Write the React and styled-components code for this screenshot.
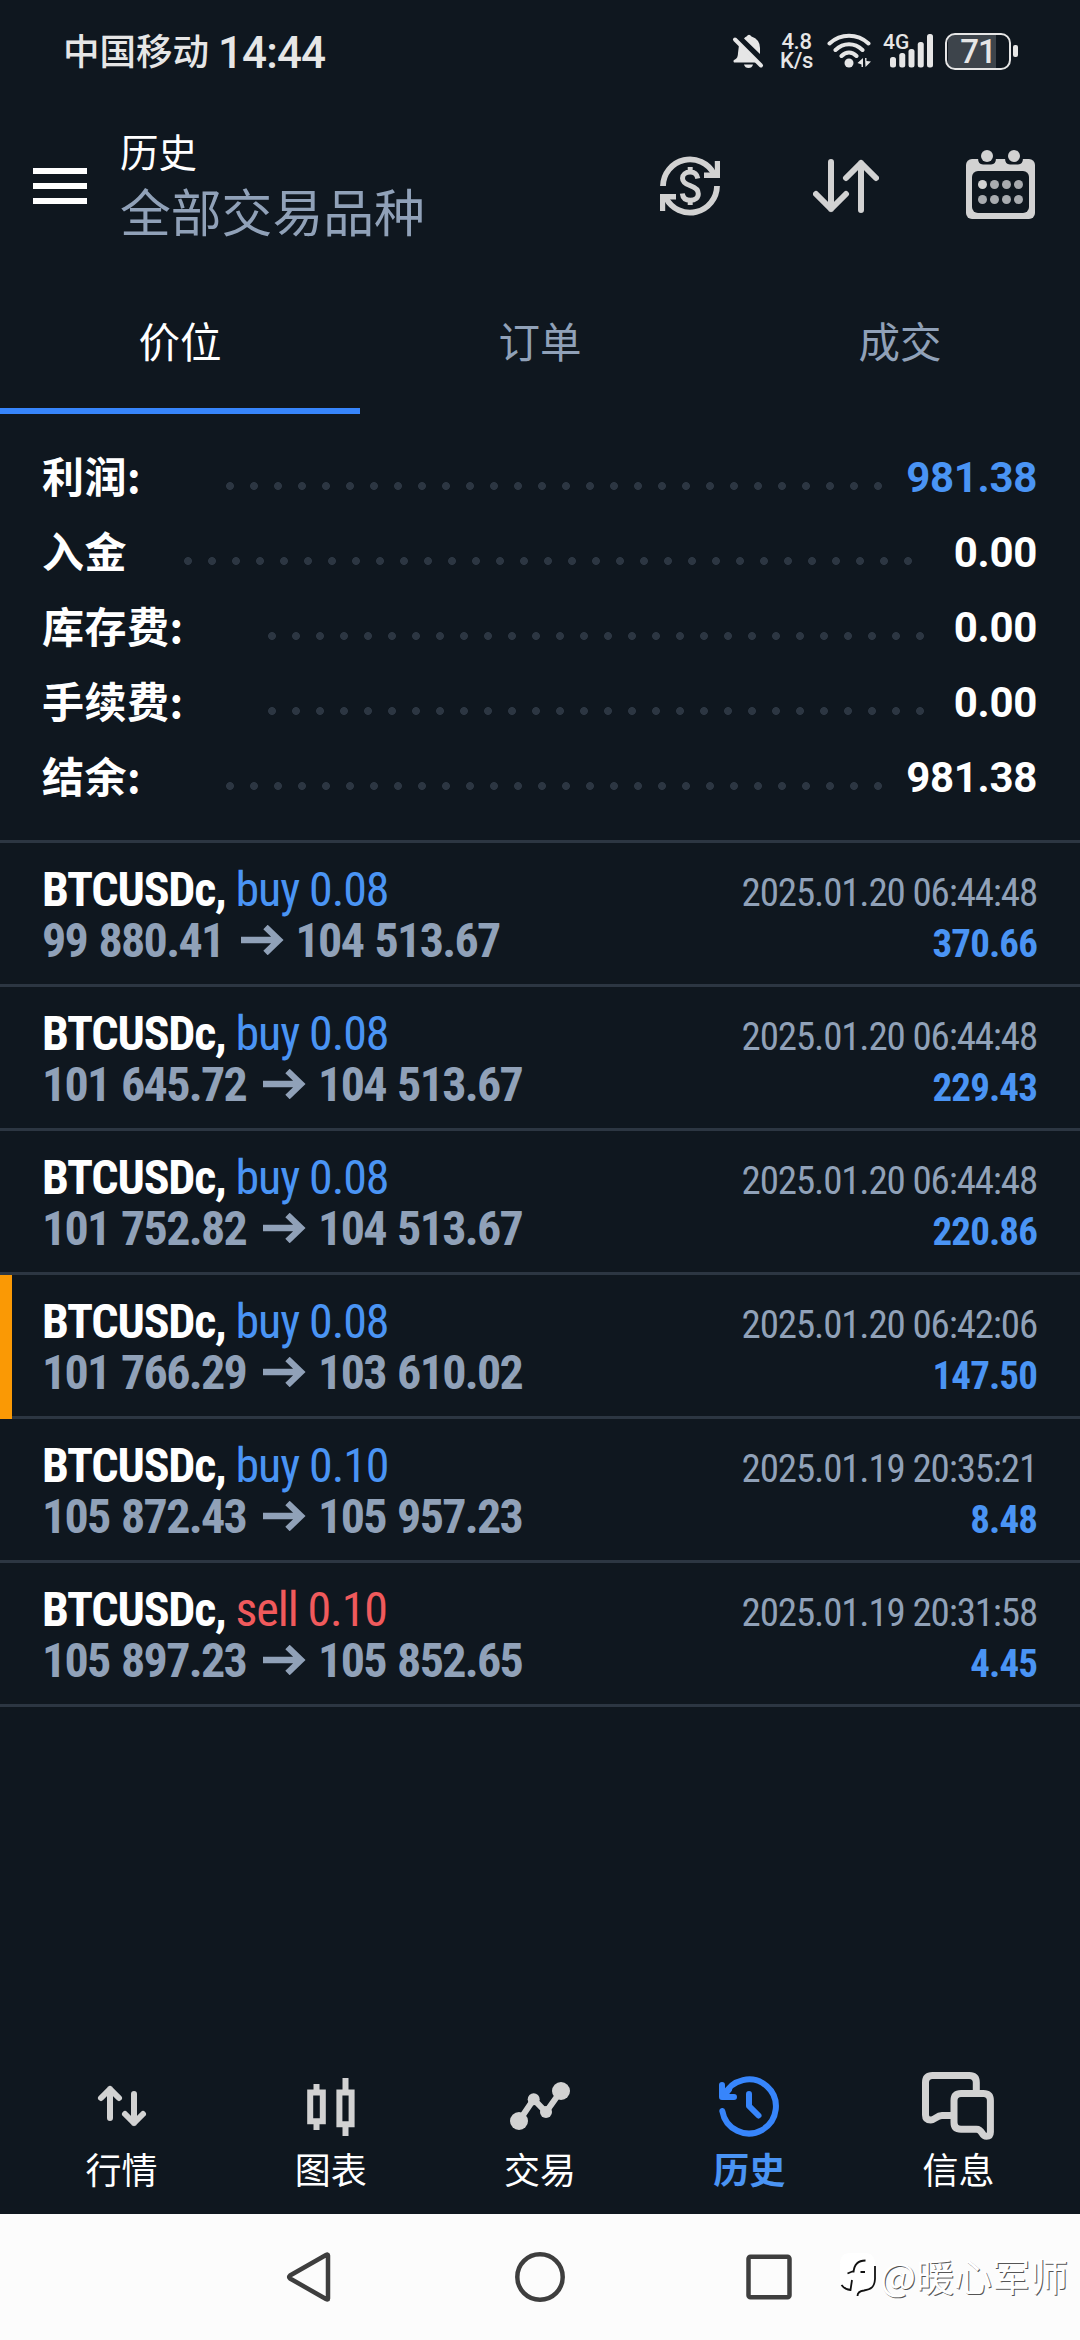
import React from 'react';
import styled, { createGlobalStyle } from 'styled-components';

const GlobalStyle = createGlobalStyle`
  body {
    margin: 0;
    background-color: #0f171f;
  }
  svg {
    display: block;
    flex-shrink: 0;
  }
`;

const cjk = '"Noto Sans CJK SC", sans-serif';
const roboto = 'Roboto, "Noto Sans CJK SC", sans-serif';
const condensed = '"Roboto Condensed", Roboto, sans-serif';

const ICON = '#d2d2d2';
const BLUE = '#4a94f4';
const ACCENT = '#3785fb';
const GREY = '#90a1b8';
const LINE = '#2c3642';

const Screen = styled.div`
  width: 1080px;
  height: 2340px;
  display: flex;
  flex-direction: column;
  background-color: #0f171f;
  color: #fff;
  font-family: ${roboto};
  overflow: hidden;
`;

/* Status bar */

const StatusBar = styled.div`
  height: 102px;
  box-sizing: border-box;
  padding: 0 62px 0 63px;
  display: flex;
  align-items: center;
  color: #e6e6e6;
`;

const Carrier = styled.span`
  margin-bottom: 2px;
  font: 500 36.5px/50px ${cjk};
`;

const Clock = styled.span`
  flex: 1;
  margin-left: 9px;
  margin-top: 4px;
  font: 500 44px/50px ${roboto};
  letter-spacing: -0.9px;
`;

const Speed = styled.div`
  width: 35px;
  margin-left: 15px;
  display: flex;
  flex-direction: column;
  align-items: center;
  font: 500 22px/19px ${roboto};
  letter-spacing: -0.3px;
`;

const StatusIcon = styled.div`
  position: relative;
  margin-left: ${props => props.$gap}px;
`;

const NetworkType = styled.span`
  position: absolute;
  left: 0;
  top: -3px;
  font: 500 21px/24px ${roboto};
`;

const Battery = styled.div`
  width: 66px;
  height: 37px;
  box-sizing: border-box;
  margin-left: 12px;
  border: 2px solid #e6e6e6;
  border-radius: 10px;
  background: linear-gradient(#3d444b, #3d444b) 1px 0 / 48px 100% no-repeat;
  font: 500 33px/34px ${roboto};
  letter-spacing: -1px;
  text-align: center;
`;

const BatteryTip = styled.div`
  width: 5px;
  height: 12px;
  margin-left: 2px;
  border-radius: 2px;
  background-color: #e6e6e6;
`;

/* Header */

const Header = styled.header`
  height: 168px;
  box-sizing: border-box;
  padding: 0 45px 0 33px;
  display: flex;
  align-items: center;
`;

const Burger = styled.div`
  width: 54px;
  height: 36px;
  box-sizing: border-box;
  border-top: 6px solid #fff;
  border-bottom: 6px solid #fff;
  background: linear-gradient(#fff, #fff) 0 9px / 100% 6px no-repeat;
`;

const Titles = styled.div`
  flex: 1;
  margin-left: 33px;
  margin-bottom: 8px;
`;

const Title = styled.div`
  font: 400 38.5px/54px ${cjk};
`;

const Subtitle = styled.div`
  margin-top: 1px;
  color: ${GREY};
  font: 400 50.8px/64px ${cjk};
`;

const Actions = styled.div`
  display: flex;
  align-items: center;
`;

const Action = styled.div`
  margin-left: ${props => props.$gap || 0}px;
`;

/* Tabs */

const Tabs = styled.div`
  height: 144px;
  display: grid;
  grid-template-columns: repeat(3, 1fr);
`;

const Tab = styled.div`
  box-sizing: border-box;
  height: 144px;
  border-bottom: 6px solid ${props => (props.$active ? ACCENT : 'transparent')};
  padding-top: 4px;
  color: ${props => (props.$active ? '#fff' : GREY)};
  font: 400 41.5px/132px ${cjk};
  text-align: center;
`;

/* Summary */

const Summary = styled.div`
  padding: 26px 43px 25px 42px;
`;

const SummaryRow = styled.div`
  height: 75px;
  display: flex;
  align-items: center;
`;

const Label = styled.span`
  width: ${props => props.$width}px;
  margin-bottom: 6px;
  font: 700 42px/60px ${cjk};
  letter-spacing: 0.5px;
  white-space: nowrap;
`;

const Dots = styled.div`
  width: ${props => props.$count * 24 - 16}px;
  height: 8px;
  margin-top: 16px;
  background: radial-gradient(circle at 4px 4px, ${LINE} 3.6px, transparent 4.2px) 0 0 / 24px 8px;
`;

const Value = styled.span`
  margin-left: auto;
  color: ${props => (props.$blue ? BLUE : '#fff')};
  font: 700 42px/75px ${roboto};
  letter-spacing: -0.3px;
`;

/* Deals */

const Deals = styled.div`
  flex: 1;
  border-top: 3px solid ${LINE};
`;

const Deal = styled.div`
  position: relative;
  height: 144px;
  box-sizing: border-box;
  padding: 21px 43px 0 42px;
  border-bottom: 3px solid ${LINE};
`;

const Marker = styled.div`
  position: absolute;
  left: 0;
  top: 0;
  width: 12px;
  height: 144px;
  background-color: #fa9905;
`;

const DealLine = styled.div`
  height: 51px;
  display: flex;
  align-items: baseline;
  justify-content: space-between;
  font: 400 48px/51px ${condensed};
  white-space: pre;
`;

const Symbol = styled.span`
  font-weight: 700;
  letter-spacing: -1.2px;
`;

const Side = styled.span`
  color: ${props => (props.$sell ? '#f05a5c' : BLUE)};
  letter-spacing: -1.1px;
`;

const Prices = styled.span`
  display: flex;
  align-items: baseline;
  color: ${GREY};
  font-weight: 700;
  letter-spacing: -1.7px;
  word-spacing: 2px;
`;

const Time = styled.span`
  color: ${GREY};
  font-size: 39px;
  letter-spacing: -1.15px;
`;

const Profit = styled.span`
  color: ${BLUE};
  font-size: 39px;
  font-weight: 700;
  letter-spacing: -0.9px;
`;

/* Bottom navigation */

const BottomNav = styled.nav`
  height: 144px;
  padding: 0 17px;
  display: grid;
  grid-template-columns: repeat(5, 1fr);
`;

const NavItem = styled.div`
  display: flex;
  flex-direction: column;
  align-items: center;
  color: ${props => (props.$active ? BLUE : '#fff')};
  font: ${props => (props.$active ? 700 : 400)} 36px/53px ${cjk};
`;

const SystemBar = styled.div`
  position: relative;
  height: 126px;
  display: grid;
  grid-template-columns: repeat(3, 230px);
  justify-content: center;
  justify-items: center;
  align-items: center;
  background-color: #fcfcfc;
`;

const Watermark = styled.div`
  position: absolute;
  left: 839px;
  top: 34px;
  display: flex;
  align-items: center;
  gap: 1px;
  color: #fff;
  font: 400 38px/54px ${cjk};
  text-shadow: 1px 1px 0 #555;
  white-space: nowrap;
`;

const Stroke = ({ w, h, color = ICON, width = 6, children }) => (
  <svg
    width={w}
    height={h}
    viewBox={`0 0 ${w} ${h}`}
    fill="none"
    stroke={color}
    strokeWidth={width}
    strokeLinecap="round"
    strokeLinejoin="round"
  >
    {children}
  </svg>
);

const BellOff = () => (
  <svg width="32" height="36" fill="#e6e6e6">
    <path d="M7 12 24 29.5H2Q.5 27.5 3 26.5 6 25 6 20Z" />
    <path d="M12 5.500Q13 4.200 14.500 3.500 17 0 19.500 3.500 28 6.500 28 15V21Z" />
    <path d="M12 31.500H21Q20 35 16.500 35T12 31.500Z" />
    <path d="M3 6.500 29 32.500" stroke="#e6e6e6" strokeWidth="4" strokeLinecap="round" />
  </svg>
);

const Wifi = () => (
  <svg width="44" height="36" fill="none" stroke="#e6e6e6" strokeWidth="4" strokeLinecap="round">
    <path d="M2.500 10.500Q11 2.800 22 2.800T41.500 10.500M8.500 17Q14.500 11.300 22 11.300T35.500 17M14.500 23Q18 19.500 22 19.500T29.500 23" />
    <circle cx="22" cy="30" r="4.500" fill="#e6e6e6" stroke="none" />
    <path d="M30.500 30 36 25V34H34.500V31.500ZM38 25H39.500V28L44 28.500 38.500 34Z" fill="#e6e6e6" stroke="none" />
  </svg>
);

const Signal = () => (
  <svg width="50" height="36" fill="#e6e6e6">
    {[24, 20, 16, 9, 1].map((y, i) => (
      <rect key={y} x={7 + i * 9.25} y={y} width="6" height={34.5 - y} rx="2.5" />
    ))}
  </svg>
);

const Currency = () => (
  <svg width="60" height="60" viewBox="0 0 60 60" fill="none" stroke={ICON} strokeWidth="5.800">
    <path d="M3 30A27 27 0 0 1 54 18" />
    <path d="M57 30A27 27 0 0 1 6 42" />
    <path d="M57.500 5V19.200H44" strokeWidth="5.400" />
    <path d="M2.500 55V40.800H16" strokeWidth="5.400" />
    <path
      d="M37.800 22.500C37 18 34 16 30.200 16 25.500 16 22.500 18.800 22.500 22.200 22.500 26.200 25.500 28 30.200 29.700 35.500 31.500 38.300 33.500 38.300 37.800 38.300 42 35 44.300 30.500 44.300 26 44.300 22.800 42 22.300 37.500M30.200 11V17M30.200 43V49"
      strokeWidth="5"
    />
  </svg>
);

const Swap = () => (
  <Stroke w={66} h={54}>
    <path d="M18 3V50M3 35 18 50 33 35M48 51V4M33 19 48 4 63 19" />
  </Stroke>
);

const Calendar = () => (
  <svg width="69" height="72" viewBox="0 0 69 72">
    <rect y="9" width="69" height="60" rx="6" fill={ICON} />
    <path d="M12 8H30Q30 14.500 25 14.500H17Q12 14.500 12 8ZM39 8H57Q57 14.500 52 14.500H44Q39 14.500 39 8Z" fill="#0f171f" />
    <circle cx="21" cy="6" r="6" fill={ICON} />
    <circle cx="48" cy="6" r="6" fill={ICON} />
    <rect x="6" y="21" width="57" height="42" rx="6" fill="#0f171f" />
    {[34.5, 49.5].map(y =>
      [16.5, 28.5, 40.5, 52.5].map(x => (
        <circle key={x + y} cx={x} cy={y} r="4.5" fill={x + y === 51 ? ICON : '#a8abaf'} />
      ))
    )}
  </svg>
);

const Arrow = () => (
  <svg width="43" height="30" viewBox="0 0 43 30" fill="none" stroke={GREY} strokeWidth="6.300">
    <path d="M0 15H38M24.500 2 38 15 24.500 28" />
  </svg>
);

const ArrowBox = styled.span`
  margin: 0 12px 0 17px;
  transform: translateY(-2px);
`;

const QuotesIcon = () => (
  <Stroke w={72} h={72}>
    <path d="M24 48V19M15 28 24 19 33 28M48 24V53M39 44 48 53 57 44" />
  </Stroke>
);

const ChartIcon = () => (
  <svg width="72" height="72" fill="none" stroke={ICON} strokeWidth="6">
    <path d="M15.200 22.500H27.800V51.200H15.200ZM21.500 14V20M21.500 53V60" />
    <path d="M44.400 22.500H56.600V54.200H44.400ZM50.500 8V20M50.500 56V66" />
  </svg>
);

const TradeIcon = () => (
  <svg width="72" height="72" fill={ICON}>
    <path d="M15 51 29.700 29.300 42 42 57 21" fill="none" stroke={ICON} strokeWidth="6" />
    <circle cx="15" cy="51" r="9" />
    <circle cx="29.700" cy="29.300" r="6" />
    <circle cx="42" cy="42" r="6" />
    <circle cx="57" cy="21" r="9" />
  </svg>
);

const HistoryIcon = () => (
  <Stroke w={72} h={72} color={ACCENT}>
    <path d="M9.300 41A27 27 0 1 0 11 26M9 15V27H21M10.500 26 16 19.500" />
    <path d="M36 24V36L45.500 45.500" />
  </Stroke>
);

const MessagesIcon = () => (
  <Stroke w={72} h={72} width={7}>
    <path
      d="M29.500 45.500H20C14.500 45.500 13 50 8.800 50 5.500 50 3.500 48.500 3.500 45V12.500Q3.500 5.500 10.500 5.500H47.300Q54.300 5.500 54.300 12.500V22"
      strokeLinecap="butt"
    />
    <path d="M39 23.500H61.400Q68.400 23.500 68.400 30.500V62Q68.400 66.300 64.500 66.300C59 66.300 61 59.200 54.500 59.200H39Q32 59.200 32 52.200V30.500Q32 23.500 39 23.500Z" />
  </Stroke>
);

const WatermarkLogo = () => (
  <svg width="40" height="46" viewBox="0 0 40 46">
    <path d="M11 1H26Q36 1 36 12V24Q36 38 26 39 21 40 18 44L18 39H12Q1 38 1 27V12Q1 1 11 1Z" fill="#fff" />
    <path
      d="M26.500 8.500C18 8.500 15 13 14.500 20.500M8.500 21.500 14.500 19M21.500 20H26M2.500 33Q6 37.500 11.500 38L13 28"
      fill="none"
      stroke="#111"
      strokeWidth="1.800"
    />
    <path d="M36 14V27C35.500 35 32 37.500 25 38.500 20.500 39 18.500 41 18.500 44" fill="none" stroke="#111" strokeWidth="1.800" />
  </svg>
);

const summary = [
  { label: '利润:', value: '981.38', labelWidth: 184, dots: 28, blue: true },
  { label: '入金', value: '0.00', labelWidth: 142, dots: 31 },
  { label: '库存费:', value: '0.00', labelWidth: 226, dots: 28 },
  { label: '手续费:', value: '0.00', labelWidth: 226, dots: 28 },
  { label: '结余:', value: '981.38', labelWidth: 184, dots: 28 },
];

const deals = [
  { side: 'buy', volume: '0.08', from: '99 880.41', to: '104 513.67', time: '2025.01.20 06:44:48', profit: '370.66' },
  { side: 'buy', volume: '0.08', from: '101 645.72', to: '104 513.67', time: '2025.01.20 06:44:48', profit: '229.43' },
  { side: 'buy', volume: '0.08', from: '101 752.82', to: '104 513.67', time: '2025.01.20 06:44:48', profit: '220.86' },
  { side: 'buy', volume: '0.08', from: '101 766.29', to: '103 610.02', time: '2025.01.20 06:42:06', profit: '147.50', marked: true },
  { side: 'buy', volume: '0.10', from: '105 872.43', to: '105 957.23', time: '2025.01.19 20:35:21', profit: '8.48' },
  { side: 'sell', volume: '0.10', from: '105 897.23', to: '105 852.65', time: '2025.01.19 20:31:58', profit: '4.45' },
];

const navItems = [
  { label: '行情', Icon: QuotesIcon },
  { label: '图表', Icon: ChartIcon },
  { label: '交易', Icon: TradeIcon },
  { label: '历史', Icon: HistoryIcon, active: true },
  { label: '信息', Icon: MessagesIcon },
];

const DealRow = ({ side, volume, from, to, time, profit, marked }) => (
  <Deal>
    {marked && <Marker />}
    <DealLine>
      <span>
        <Symbol>BTCUSDc, </Symbol>
        <Side $sell={side === 'sell'}>
          {side} {volume}
        </Side>
      </span>
      <Time>{time}</Time>
    </DealLine>
    <DealLine>
      <Prices>
        {from}
        <ArrowBox>
          <Arrow />
        </ArrowBox>
        {to}
      </Prices>
      <Profit>{profit}</Profit>
    </DealLine>
  </Deal>
);

export default function App() {
  return (
    <Screen>
      <GlobalStyle />
      <StatusBar>
        <Carrier>中国移动</Carrier>
        <Clock>14:44</Clock>
        <BellOff />
        <Speed>
          <span>4.8</span>
          <span>K/s</span>
        </Speed>
        <StatusIcon $gap={13}>
          <Wifi />
        </StatusIcon>
        <StatusIcon $gap={12}>
          <NetworkType>4G</NetworkType>
          <Signal />
        </StatusIcon>
        <Battery>71</Battery>
        <BatteryTip />
      </StatusBar>
      <Header>
        <Burger />
        <Titles>
          <Title>历史</Title>
          <Subtitle>全部交易品种</Subtitle>
        </Titles>
        <Actions>
          <Action>
            <Currency />
          </Action>
          <Action $gap={93}>
            <Swap />
          </Action>
          <Action $gap={87}>
            <Calendar />
          </Action>
        </Actions>
      </Header>
      <Tabs>
        <Tab $active>价位</Tab>
        <Tab>订单</Tab>
        <Tab>成交</Tab>
      </Tabs>
      <Summary>
        {summary.map(row => (
          <SummaryRow key={row.label}>
            <Label $width={row.labelWidth}>{row.label}</Label>
            <Dots $count={row.dots} />
            <Value $blue={row.blue}>{row.value}</Value>
          </SummaryRow>
        ))}
      </Summary>
      <Deals>
        {deals.map(deal => (
          <DealRow key={deal.from} {...deal} />
        ))}
      </Deals>
      <BottomNav>
        {navItems.map(({ label, Icon, active }) => (
          <NavItem key={label} $active={active}>
            <Icon />
            {label}
          </NavItem>
        ))}
      </BottomNav>
      <SystemBar>
        <Stroke w={48} h={50} color="#3e3e3e" width={4.5}>
          <path d="M42 3.500V46.500Q42 48 40 47L4 26.500Q2.500 25 4 23.500L40 3Q42 2 42 3.500Z" />
        </Stroke>
        <Stroke w={50} h={50} color="#3e3e3e" width={4.5}>
          <circle cx="25" cy="25" r="22.7" />
        </Stroke>
        <Stroke w={48} h={50} color="#3e3e3e" width={4.5}>
          <rect x="2.500" y="4.700" width="41" height="40.500" rx="2" />
        </Stroke>
        <Watermark>
          <WatermarkLogo />
          @暖心军师
        </Watermark>
      </SystemBar>
    </Screen>
  );
}
